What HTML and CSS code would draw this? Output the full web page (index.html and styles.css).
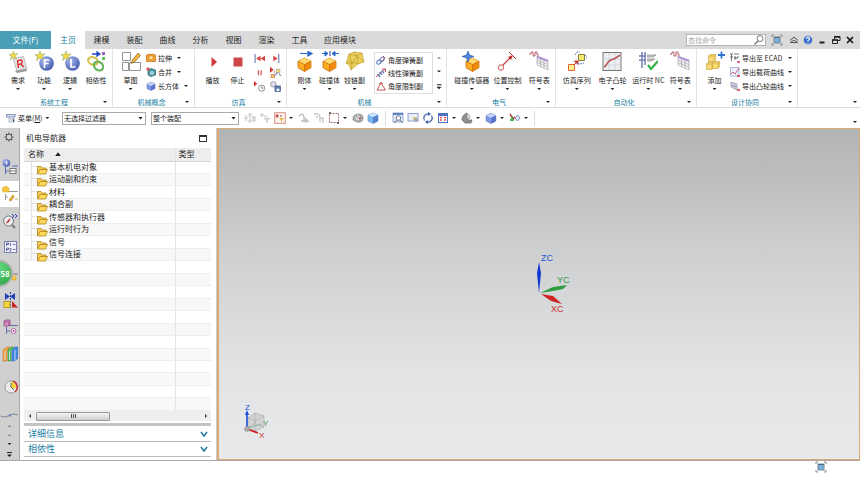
FILE: index.html
```html
<!DOCTYPE html>
<html lang="zh-CN">
<head>
<meta charset="utf-8">
<title>机电概念设计</title>
<link rel="stylesheet" href="styles.css">
</head>
<body>
<svg class="defs" aria-hidden="true">
  <defs>
    <radialGradient id="ball" cx=".35" cy=".3" r=".8"><stop offset="0" stop-color="#a9b9f0"/><stop offset="1" stop-color="#3c54a8"/></radialGradient>
    <symbol id="star" viewBox="0 0 10 10"><path d="M5 0 6 3.400 10 3 7 5.400 8.500 9 5 7 1.500 9.500 2.800 5.800 0 3.800 3.800 3.400Z" fill="#f7dc45" stroke="#93a860" stroke-width=".6"/></symbol>
    <symbol id="orangecube" viewBox="0 0 14 14"><path d="M1 4 7 1 13 4V10L7 13.500 1 10Z" fill="#ffae22" stroke="#c66a08" stroke-width=".8"/><path d="M1 4 7 1 13 4 7 7Z" fill="#ffdb6e"/><path d="M7 7 13 4V10L7 13.500Z" fill="#f08a10"/><path d="M1 4 7 7 13 4M7 7V13" fill="none" stroke="#c66a08" stroke-width=".7"/></symbol>
    <symbol id="bluecube" viewBox="0 0 10 10"><path d="M1 3 5 1 9 3V7.500L5 9.500 1 7.500Z" fill="#7f99e6" stroke="#5f74c0" stroke-width=".6"/><path d="M1 3 5 1 9 3 5 5Z" fill="#c6d3fa"/><path d="M5 5 9 3V7.500L5 9.500Z" fill="#5a74cc"/></symbol>
    <symbol id="yellowcube" viewBox="0 0 8 8"><path d="M.5 2 2 .5H7.500V6L6 7.500H.5Z" fill="#f9dc74" stroke="#c79d34" stroke-width=".6"/><path d="M.5 2H6V7.500M6 2 7.500 .5" fill="none" stroke="#c79d34" stroke-width=".6"/></symbol>

    <symbol id="req" viewBox="0 0 20 22"><path d="M5 7.500 15.500 5.500 19 18 9 20.500Z" fill="#e3e3e3" stroke="#aaa" stroke-width=".7"/><path d="M7 20 18 17.500 19 20 9 22Z" fill="#999"/><path d="M10.500 17 9.500 10 12.500 9Q15.500 9.500 13.500 12.500L10.500 13.500M12.500 13 16 16" fill="none" stroke="#d22" stroke-width="1.300"/><use href="#star" x="1" y="0" width="9" height="9"/></symbol>
    <symbol id="func" viewBox="0 0 20 22"><circle cx="12.500" cy="12.500" r="7.300" fill="url(#ball)"/><path d="M10.500 17V9H15.500M10.500 12.500H14.500" fill="none" stroke="#fff" stroke-width="1.700"/><use href="#star" x="1" y="0" width="10" height="10"/></symbol>
    <symbol id="logic" viewBox="0 0 20 22"><circle cx="12.500" cy="12.500" r="7.300" fill="url(#ball)"/><path d="M11 8V16H15.500" fill="none" stroke="#fff" stroke-width="1.700"/><use href="#star" x="1" y="0" width="10" height="10"/></symbol>
    <symbol id="dep" viewBox="0 0 20 22"><ellipse cx="7" cy="10" rx="5" ry="3.700" transform="rotate(20 7 10)" fill="none" stroke="#d4c04c" stroke-width="2.200"/><ellipse cx="12.500" cy="15" rx="5" ry="4" transform="rotate(40 12.500 15)" fill="none" stroke="#65b35a" stroke-width="2.200"/><path d="M6 3H12M11 1 14 3 11 5Z" stroke="#2448c0" stroke-width="1.300" fill="#2448c0"/><rect x="16" y="1" width="3" height="3" fill="#a05ed0"/><rect x="16" y="6" width="3" height="3" fill="#5cc65c"/></symbol>
    <symbol id="sketch" viewBox="0 0 20 22"><path d="M1.500 1.500H9.500V9.500H1.500ZM1.500 11.500H7.500V19.500H1.500ZM8.500 11.500H19.500V19.500H8.500Z" fill="#fff" stroke="#888" stroke-width=".9"/><path d="M17 2 19.500 4.500 13.500 11 10 12.500 11.500 9Z" fill="#f3b53b" stroke="#8a6426" stroke-width=".7"/></symbol>
    <symbol id="rigid" viewBox="0 0 20 22"><use href="#orangecube" x="2" y="6" width="15" height="15"/><path d="M5 2.500H14M13 .5 17 2.500 13 5Z" fill="#2b66c8" stroke="#2b66c8" stroke-width="1.200"/></symbol>
    <symbol id="collide" viewBox="0 0 20 22"><use href="#orangecube" x="2" y="6" width="15" height="15"/><path d="M2 2.500H6M5 .5 8 2.500 5 5ZM19 2.500H15M15 .5 12 2.500 15 5Z" fill="#2b66c8" stroke="#2b66c8"/><path d="M10 0V5" stroke="#223e90"/></symbol>
    <symbol id="hinge" viewBox="0 0 20 22"><path d="M4 3 9 1 17 2 19 11 13 13 6 19 4 14 1 12Z" fill="#ecd05a" stroke="#b99a34" stroke-width=".6"/><path d="M4 3 12 5 17 2M12 5 13 13 3 10M4 3 7 13 12 5 19 11M9 1 12 5M1 12 7 13M6 19 7 13" fill="none" stroke="#a98a26" stroke-width=".5"/></symbol>
    <symbol id="sensor" viewBox="0 0 20 22"><use href="#orangecube" x="3" y="6" width="15" height="15"/><path d="M6 0 7.500 4 12 5.500 7.500 7 6 11 4.500 7 0 5.500 4.500 4Z" fill="#4d83dc" stroke="#2854a8" stroke-width=".6"/></symbol>
    <symbol id="position" viewBox="0 0 20 22"><circle cx="4" cy="16.500" r="2.600" fill="#fff" stroke="#d87870" stroke-width="1.100"/><path d="M6 14 14 6" stroke="#bd3030" stroke-width="1.200"/><path d="M11 6 16 4 14 9Z" fill="#bd3030"/><path d="M12 1 19 8" stroke="#bd3030"/></symbol>
    <symbol id="signals" viewBox="0 0 20 22"><path d="M0 3H2V1H4V5H6V1H8V4H10" fill="none" stroke="#b3525e" stroke-width=".9"/><path d="M8 5 19 9V19L8 14Z" fill="#f6f4fa" stroke="#999" stroke-width=".6"/><path d="M8 5 19 9V11L8 7Z" fill="#b291dd"/><path d="M8 9 19 13.500M8 11.500 19 16M11.500 7V15.500M15 8V17" stroke="#999" stroke-width=".6"/></symbol>
    <symbol id="seq" viewBox="0 0 20 22"><path d="M11.500 3.500H17.500V9.500H11.500Z" fill="#f7e96a" stroke="#88803a"/><path d="M1.500 13.500H7.500V19.500H1.500Z" fill="#fbf08a" stroke="#de643d"/><path d="M7 14 10 11M7.500 10H11V13.500Z" stroke="#c33" fill="#c33"/><path d="M8 4 10 1 13 1M18 4 20 6 20 9M10 12 13 13 17 12" fill="none" stroke="#5777b5" stroke-dasharray="2 1"/></symbol>
    <symbol id="cam" viewBox="0 0 20 22"><rect x="1" y="1.500" width="18" height="18" fill="#eceef2" stroke="#777"/><path d="M7 2V19M13 2V19M1 8H19M1 14H19" stroke="#cbd0d8" stroke-width=".7"/><path d="M2 16C5 15 5 10 9 9S14 7 18 4" fill="none" stroke="#bd4a4a" stroke-width="1.500"/></symbol>
    <symbol id="nc" viewBox="0 0 20 22"><path d="M1 5H8M1 9H8M4 1V17M7 1V14" stroke="#7380b5" stroke-width="1.500"/><path d="M9 4H18L15 6H9M9 8H17L13 10H9" fill="#ccc" stroke="#888" stroke-width=".7"/><path d="M10 14 13 18 20 10" fill="none" stroke="#35b44a" stroke-width="2.200"/></symbol>
    <symbol id="add" viewBox="0 0 20 22"><use href="#yellowcube" x="3" y="3" width="8" height="8"/><use href="#yellowcube" x="1" y="11" width="8" height="8"/><use href="#yellowcube" x="7" y="10" width="8" height="8"/><path d="M13 4H20M16.500 .5V7.500" stroke="#2f74d2" stroke-width="1.800"/></symbol>

    <symbol id="extrude" viewBox="0 0 10 10"><path d="M.5 2 4 1 5 2 6 1 9.500 2V8.500H.5Z" fill="#f4a632" stroke="#c0690f" stroke-width=".7"/><rect x="3" y="3" width="4" height="3.500" fill="#ffe4a0" stroke="#c0690f" stroke-width=".5"/></symbol>
    <symbol id="union" viewBox="0 0 10 10"><path d="M2 3 5 1.500 9.500 3V8L5 9.500 2 8Z" fill="#4d9ca7" stroke="#28616f" stroke-width=".7"/><circle cx="6" cy="6" r="2" fill="#a6d0d6"/><path d="M0 2H4M2 0V4" stroke="#d33"/></symbol>
    <symbol id="play" viewBox="0 0 20 22"><path d="M8.500 6 14 11 8.500 16Z" fill="#d33b3b"/></symbol>
    <symbol id="stop" viewBox="0 0 20 22"><rect x="5.500" y="6.500" width="9" height="9" fill="#cf4646"/></symbol>
    <symbol id="rew" viewBox="0 0 10 10"><path d="M1 1V9" stroke="#667bb0"/><path d="M6 2.500V7.500L2 5ZM10 2.500V7.500L6 5Z" fill="#d84444"/></symbol>
    <symbol id="fwd" viewBox="0 0 10 10"><path d="M8 1V9" stroke="#667bb0"/><path d="M3 2.500V7.500L7 5Z" fill="#d84444"/></symbol>
    <symbol id="pause" viewBox="0 0 10 10"><path d="M4 3V7.500M6.500 3V7.500" stroke="#e06060" stroke-width="1.200"/></symbol>
    <symbol id="simstep" viewBox="0 0 10 10"><path d="M0 0V5L3 2.500ZM4 3V6" fill="#d33" stroke="#d33" stroke-width=".5"/><rect x="6" y="2" width="3" height="3" fill="#f7e56a" stroke="#999" stroke-width=".6"/><rect x="1" y="7" width="3" height="3" fill="#f7c56a" stroke="#c63" stroke-width=".6"/><path d="M4 8 7 5M8 6 10 8" stroke="#88a"/></symbol>
    <symbol id="simtime" viewBox="0 0 10 10"><path d="M0 0V5L3 2.500Z" fill="#d33"/><circle cx="7" cy="6.500" r="2.800" fill="#fff" stroke="#7c828c" stroke-width=".8"/><path d="M7 5V6.500H8.500" fill="none" stroke="#555" stroke-width=".7"/></symbol>
    <symbol id="simsave" viewBox="0 0 10 10"><circle cx="3" cy="3" r="2.500" fill="#dde" stroke="#889" stroke-width=".7"/><rect x="4.500" y="4.500" width="5" height="5" fill="#5f7cae" stroke="#3d5787" stroke-width=".6"/><rect x="6" y="7" width="2.500" height="2" fill="#fff"/></symbol>
    <symbol id="spring" viewBox="0 0 10 10"><path d="M6 6 9 3 7 1" fill="none" stroke="#c44"/><ellipse cx="3" cy="7" rx="2.500" ry="1.800" transform="rotate(-35 3 7)" fill="none" stroke="#5877bb"/><ellipse cx="6" cy="4.500" rx="2.600" ry="1.800" transform="rotate(-50 6 4.500)" fill="none" stroke="#7188c5"/></symbol>
    <symbol id="linspring" viewBox="0 0 10 10"><path d="M0 9 9 1M6 1H9.500V4" fill="none" stroke="#c44" stroke-width=".9"/><path d="M1.500 6 4 9M3.500 4 6 7M5.500 2.500 8 5" stroke="#5877bb" stroke-width="1.300"/></symbol>
    <symbol id="limit" viewBox="0 0 10 10"><path d="M5 2 1 9H9.500L5 2M3 3Q5 0 7 3" fill="none" stroke="#c45555"/></symbol>
    <symbol id="ecad" viewBox="0 0 10 10"><path d="M0 1H3M1.500 1V8M0 4H3M4 1H9M5 3V7M8 3V5" fill="none" stroke="#555" stroke-width=".8"/><path d="M4 5H8" stroke="#555"/><path d="M7 9H10" stroke="#c36" stroke-width="1.500"/></symbol>
    <symbol id="load" viewBox="0 0 10 10"><path d="M.5 .5V9H9V.5Z" fill="#edf0fa" stroke="#8c9bc5" stroke-width=".7"/><path d="M1 7 3 5 5 7 9 1" fill="none" stroke="#c45b8b"/><path d="M7 9H10" stroke="#d34" stroke-width="1.500"/></symbol>
    <symbol id="camexp" viewBox="0 0 10 10"><path d="M1 1 7 3V9L1 6ZM3 2V7M5 2.500V8M1 4 7 6" fill="#eef" stroke="#8885a0" stroke-width=".7"/><path d="M7 9H10" stroke="#d34" stroke-width="1.500"/></symbol>

    <symbol id="menu" viewBox="0 0 10 10"><path d="M.5 1.500H9.500M.5 1V4H9V1" fill="#dce6f5" stroke="#8595b4"/><path d="M3 4V9H8V4Z" fill="#fff" stroke="#8595b4" stroke-width=".7"/><path d="M4 5.500H7M4 7H7" stroke="#8595b4" stroke-width=".6"/><path d="M7 5V9L8.500 8" fill="#444"/></symbol>
    <symbol id="snap" viewBox="0 0 12 12"><path d="M2 3V9M6 1V11M9 4V9M0 6H4M4 3 8 2M4 9 11 9V5H8" fill="none" stroke="#c9c9c9" stroke-width="1.200"/></symbol>
    <symbol id="filter0" viewBox="0 0 12 12"><path d="M1 3H5M3 1V5M5 4H8" stroke="#c4c4c4"/><path d="M5 6H11L8.500 8.500V11L7.500 10V8.500Z" fill="#ddd" stroke="#c0c0c0" stroke-width=".6"/></symbol>
    <symbol id="filter1" viewBox="0 0 12 12"><rect x=".7" y=".7" width="10.600" height="10.600" fill="#fff7f2" stroke="#d98c80"/><path d="M3 2V6M1.500 4H5M6 4H8" stroke="#a33"/><path d="M5 6H10L8 8.500V10.500L7 9.500V8.500Z" fill="#e6b64a"/></symbol>
    <symbol id="curve1" viewBox="0 0 12 12"><path d="M1 4Q5 0 6 5V9M3 9H10L7 6M8 7V11" fill="none" stroke="#bdbdbd" stroke-width="1.300"/></symbol>
    <symbol id="curve2" viewBox="0 0 12 12"><path d="M1 2H5Q7 3 7 6V10M7 6H10V11M3 5H5" fill="none" stroke="#c5c5c5" stroke-width="1.300"/></symbol>
    <symbol id="marquee" viewBox="0 0 12 12"><rect x="1.500" y="1.500" width="9" height="9" fill="none" stroke="#a66b6b" stroke-dasharray="2 1"/><path d="M1 1H3M9 11H11" stroke="#444" stroke-width="1.500"/></symbol>
    <symbol id="disc" viewBox="0 0 12 12"><path d="M1 8Q0 3 6 2 12 2 11 7 10 11 5 10Z" fill="#a9acb4" stroke="#888" stroke-width=".7"/><path d="M3 5 7 8M5 3 9 6M4 8 8 4" stroke="#eee"/><circle cx="8" cy="6" r="1.300" fill="#c67070"/></symbol>
    <symbol id="skycube" viewBox="0 0 12 12"><path d="M1 3 6 1 11 3V9L6 11.500 1 9Z" fill="#79b5ee" stroke="#5a8ac5" stroke-width=".6"/><path d="M1 3 6 1 11 3 6 5Z" fill="#d0e8ff"/><path d="M6 5 11 3V9L6 11.500Z" fill="#5781cd"/></symbol>
    <symbol id="zoomwin" viewBox="0 0 12 12"><rect x="1" y="1" width="10" height="9" fill="#e6edfa" stroke="#6c85bd" stroke-width=".7"/><path d="M1 2H11" stroke="#4068b8" stroke-width="1.500"/><circle cx="6.500" cy="6" r="2.300" fill="#fff" stroke="#678"/><path d="M5 8 2 11M8 8 10.500 11" stroke="#678"/></symbol>
    <symbol id="fitwin" viewBox="0 0 12 12"><rect x="1" y="1.500" width="10" height="7.500" fill="#e9eefa" stroke="#8ca0cc"/><path d="M6 5H10V8H6Z" fill="#e6c96a"/><circle cx="9" cy="8" r="2" fill="#9ab"/></symbol>
    <symbol id="rotate" viewBox="0 0 12 12"><path d="M2.500 8.500A4.300 4.300 0 0 1 6 1.800M9.500 3.500A4.300 4.300 0 0 1 6 10.200" fill="none" stroke="#4c6cae" stroke-width="1.300"/><path d="M6 0 9 2 6 4ZM6 8 3 10 6 12Z" fill="#3c62ae"/></symbol>
    <symbol id="views" viewBox="0 0 12 12"><rect x="1" y="1" width="10" height="10" fill="#4d70c2"/><path d="M2 4H10V10H2Z" fill="#fff"/><path d="M3 5.500H5M7 5.500H9M3 8H5M7 8H9" stroke="#d55" stroke-width="1.500"/></symbol>
    <symbol id="section" viewBox="0 0 12 12"><path d="M6 1Q1 3 1 8L4 11H10L11 8 7 8Z" fill="#8e8e8e" stroke="#666" stroke-width=".7"/><path d="M6 1V7L9 6Q9 3 6 1Z" fill="#ddd" stroke="#888" stroke-width=".6"/></symbol>
    <symbol id="layer" viewBox="0 0 12 12"><path d="M1 2 4 7 6 5" fill="none" stroke="#c33" stroke-width="1.500"/><path d="M1 8H5M3 4V9" stroke="#3a4" stroke-width="1.500"/><path d="M6 6 8.500 3 11 6 8.500 9Z" fill="#dce5f5" stroke="#7f91b8"/></symbol>

    <symbol id="lens" viewBox="0 0 12 12"><circle cx="7" cy="4.500" r="3" fill="#fff" stroke="#777"/><path d="M5 7 1.500 10.500" stroke="#777" stroke-width="1.500"/></symbol>
    <symbol id="full" viewBox="0 0 12 12"><path d="M1 3V1H3M9 1H11V3M11 9V11H9M3 11H1V9" fill="none" stroke="#888"/><rect x="3" y="3" width="6" height="6" fill="#77b1df" stroke="#7a8894"/><path d="M3 3.500H9" stroke="#5b6771"/></symbol>
    <symbol id="collapse" viewBox="0 0 12 12"><path d="M2 6.500 6 3 10 6.500M2.500 8.500 6 6 9.500 8.500Z" fill="none" stroke="#444" stroke-width=".9"/></symbol>
    <symbol id="help" viewBox="0 0 12 12"><circle cx="6" cy="6" r="4.300" fill="#3f70cf"/><path d="M4.500 4.700Q4.500 3.200 6 3.200T7.500 4.700Q7.500 5.500 6 6.500V7M6 8.200V9.300" fill="none" stroke="#fff" stroke-width="1.200"/></symbol>
    <symbol id="min" viewBox="0 0 12 12"><path d="M3.500 8.500H8.500" stroke="#222" stroke-width="2"/></symbol>
    <symbol id="restore" viewBox="0 0 12 12"><path d="M4.500 5V2.500H10V6.500H8M2.500 6H7.500V9.500H2.500Z" fill="none" stroke="#222"/><path d="M4 3H10M2 6H8" stroke="#222" stroke-width="1.500"/></symbol>
    <symbol id="close" viewBox="0 0 12 12"><path d="M3 3 9 9M9 3 3 9" stroke="#111" stroke-width="1.600"/></symbol>
    <symbol id="gear" viewBox="0 0 12 12"><circle cx="6" cy="6" r="3" fill="none" stroke="#555"/><path d="M6 1.500V3M6 9V10.500M1.500 6H3M9 6H10.500M2.800 2.800 4 4M8 8 9.200 9.200M9.200 2.800 8 4M4 8 2.800 9.200" stroke="#555" stroke-width="1.200"/></symbol>
    <symbol id="folder" viewBox="0 0 11 10"><path d="M.5 8.500V1.500H4L5 3H9V5" fill="#f5cd5a" stroke="#b18317" stroke-width=".8"/><path d="M.5 9 3 4.500H10.500L8.500 9Z" fill="#ffd95c" stroke="#b18317" stroke-width=".8"/></symbol>

    <symbol id="s1" viewBox="0 0 16 18"><circle cx="4.500" cy="5" r="3.800" fill="url(#ball)"/><path d="M3.500 4Q5.500 3 5 5T4 7" stroke="#fff" fill="none"/><path d="M10 8H16M3.500 9V16M3.500 13H7" stroke="#5770b5"/><rect x="8" y="10.500" width="6" height="5" fill="#fff" stroke="#777"/><path d="M8 13H14" stroke="#777"/></symbol>
    <symbol id="s2" viewBox="0 0 16 18"><path d="M0 3 4 1 7 3V7H1Z" fill="#f7c640" stroke="#d69c26" stroke-width=".5"/><path d="M7 6.500H16M3.500 9V15M3.500 12H6" stroke="#999"/><path d="M7 15 11 10 12 12 9 16ZM13 14H16" fill="#e9b440" stroke="#b68424" stroke-width=".7"/></symbol>
    <symbol id="s3" viewBox="0 0 16 18"><circle cx="6.500" cy="9" r="5" fill="#e9f0f5" stroke="#777"/><path d="M3.500 12 6 8 9 6 7 10Z" fill="#c33"/><path d="M10 13 13 16" stroke="#777" stroke-width="2"/><path d="M10 2 12 4 10 6M13 2 15 4 13 6" fill="none" stroke="#2448b8"/></symbol>
    <symbol id="s4" viewBox="0 0 16 18"><rect x="2.500" y="3.500" width="12" height="11" fill="#f0f1ff" stroke="#7c82b0"/><path d="M4.500 8V5H6.500V6.500H4.500M8.500 5V8M4.500 13V10H6.500V11.500H4.500M7.500 10.500H9V11.500L7.500 13H9M11 6.500H13.500M11 11.500H13.500" fill="none" stroke="#4a4d85" stroke-width=".8"/></symbol>
    <symbol id="s5" viewBox="0 0 16 18"><path d="M10 9H16" stroke="#777"/><circle cx="12" cy="13" r="2.600" fill="#eeb238"/><circle cx="12" cy="12.500" r="1" fill="#ffe59a"/></symbol>
    <symbol id="s6" viewBox="0 0 16 18"><path d="M3 2 8 5.500 3 9ZM13 2 8 5.500 13 9Z" fill="#2442b8"/><path d="M8.500 1V17" stroke="#2442b8" stroke-dasharray="2 1"/><rect x="2" y="10.500" width="6" height="6" fill="#f6d93e" stroke="#b9991d"/><path d="M10 10 16 16.500H10Z" fill="#c92626"/></symbol>
    <symbol id="s7" viewBox="0 0 16 18"><path d="M2 3 4 2H8V7L7 8H2Z" fill="#d892c8" stroke="#8c407c" stroke-width=".8"/><path d="M2 4H7V8" fill="none" stroke="#8c407c" stroke-width=".7"/><path d="M8 7.500H16M4.500 9V16M4.500 13H8" stroke="#656da5" fill="none"/><circle cx="11.500" cy="13" r="2.500" fill="#fff" stroke="#b060a0"/><circle cx="11.500" cy="13" r="1" fill="#a04080"/></symbol>
    <symbol id="s8" viewBox="0 0 16 18"><path d="M1 5 5 2H8L5 5V16H1Z" fill="#f3a444" stroke="#b9641b" stroke-width=".5"/><path d="M6 5 9 2H12L9 5V16H6Z" fill="#57c057" stroke="#268a34" stroke-width=".5"/><path d="M10 5 13 2H16V13L13 16H10Z" fill="#4388df" stroke="#225ba8" stroke-width=".5"/><path d="M3 6V15M7.500 6V15M13 5V16" stroke="#dceaff" stroke-width=".8"/></symbol>
    <symbol id="s9" viewBox="0 0 16 18"><circle cx="9" cy="9" r="6" fill="#ececec" stroke="#9b9b9b"/><path d="M9 10V4A5 5 0 0 1 14 10Z" fill="#f3d630"/><path d="M11 3A6.500 6.500 0 0 1 13 14" fill="none" stroke="#cb3333" stroke-width="1.500"/><path d="M9 5V9L12 12" fill="none" stroke="#666"/></symbol>
    <symbol id="s10" viewBox="0 0 20 6"><path d="M1 4Q4 6 8 4T13 2 18 3" fill="none" stroke="#848b99" stroke-width="1.200"/><circle cx="10" cy="3.500" r="1.200" fill="#6d80c0"/></symbol>
  </defs>
</svg>

<header class="tabbar">
  <button class="tab file">文件(F)</button>
  <nav class="tabs">
    <button class="tab active">主页</button><button class="tab">建模</button><button class="tab">装配</button><button class="tab">曲线</button><button class="tab">分析</button><button class="tab">视图</button><button class="tab">渲染</button><button class="tab">工具</button><button class="tab">应用模块</button>
  </nav>
  <label class="search"><input type="text" placeholder="查找命令" aria-label="查找命令"><svg class="ic12"><use href="#lens"/></svg></label>
  <div class="winbtns">
    <button aria-label="全屏"><svg class="ic12"><use href="#full"/></svg></button>
    <button aria-label="折叠"><svg class="ic12"><use href="#collapse"/></svg></button>
    <button aria-label="帮助"><svg class="ic12"><use href="#help"/></svg></button>
    <button aria-label="最小化"><svg class="ic12"><use href="#min"/></svg></button>
    <button aria-label="还原"><svg class="ic12"><use href="#restore"/></svg></button>
    <button aria-label="关闭"><svg class="ic12"><use href="#close"/></svg></button>
  </div>
</header>

<section class="ribbon">
  <div class="group g-system">
    <div class="tools">
      <button class="big"><svg><use href="#req"/></svg>需求<i class="caret"></i></button>
      <button class="big"><svg><use href="#func"/></svg>功能<i class="caret"></i></button>
      <button class="big"><svg><use href="#logic"/></svg>逻辑<i class="caret"></i></button>
      <button class="big"><svg><use href="#dep"/></svg>相依性</button>
    </div>
    <div class="name"><span>系统工程</span><i class="caret"></i></div>
  </div>
  <div class="group g-concept">
    <div class="tools">
      <button class="big"><svg><use href="#sketch"/></svg>草图<i class="caret"></i></button>
      <div class="list">
        <button class="row"><svg><use href="#extrude"/></svg>拉伸<i class="caret"></i></button>
        <button class="row"><svg><use href="#union"/></svg>合并<i class="caret"></i></button>
        <button class="row"><svg><use href="#bluecube"/></svg>长方体<i class="caret"></i></button>
      </div>
    </div>
    <div class="name"><span>机械概念</span><i class="caret"></i></div>
  </div>
  <div class="group g-sim">
    <div class="tools">
      <button class="big"><svg><use href="#play"/></svg>播放</button>
      <button class="big"><svg><use href="#stop"/></svg>停止</button>
      <div class="pad">
        <button aria-label="后退"><svg><use href="#rew"/></svg></button>
        <button aria-label="前进"><svg><use href="#fwd"/></svg></button>
        <button aria-label="暂停"><svg><use href="#pause"/></svg></button>
        <button aria-label="步进"><svg><use href="#simstep"/></svg></button>
        <button aria-label="时间"><svg><use href="#simtime"/></svg></button>
        <button aria-label="保存"><svg><use href="#simsave"/></svg></button>
      </div>
    </div>
    <div class="name"><span>仿真</span><i class="caret"></i></div>
  </div>
  <div class="group g-mech">
    <div class="tools">
      <button class="big"><svg><use href="#rigid"/></svg>刚体<i class="caret"></i></button>
      <button class="big"><svg><use href="#collide"/></svg>碰撞体<i class="caret"></i></button>
      <button class="big"><svg><use href="#hinge"/></svg>铰链副<i class="caret"></i></button>
      <div class="gallery">
        <button class="row"><svg><use href="#spring"/></svg>角度弹簧副</button>
        <button class="row"><svg><use href="#linspring"/></svg>线性弹簧副</button>
        <button class="row"><svg><use href="#limit"/></svg>角度限制副</button>
      </div>
      <div class="spin"><i class="caret up dim"></i><i class="caret"></i><i class="caret more"></i></div>
    </div>
    <div class="name"><span>机械</span><i class="caret"></i></div>
  </div>
  <div class="group g-elec">
    <div class="tools">
      <button class="big"><svg><use href="#sensor"/></svg>碰撞传感器<i class="caret"></i></button>
      <button class="big"><svg><use href="#position"/></svg>位置控制<i class="caret"></i></button>
      <button class="big"><svg><use href="#signals"/></svg>符号表<i class="caret"></i></button>
    </div>
    <div class="name"><span>电气</span><i class="caret"></i></div>
  </div>
  <div class="group g-auto">
    <div class="tools">
      <button class="big"><svg><use href="#seq"/></svg>仿真序列<i class="caret"></i></button>
      <button class="big"><svg><use href="#cam"/></svg>电子凸轮<i class="caret"></i></button>
      <button class="big"><svg><use href="#nc"/></svg>运行时 NC<i class="caret"></i></button>
      <button class="big"><svg><use href="#signals"/></svg>符号表<i class="caret"></i></button>
    </div>
    <div class="name"><span>自动化</span><i class="caret"></i></div>
  </div>
  <div class="group g-design">
    <div class="tools">
      <button class="big"><svg><use href="#add"/></svg>添加<i class="caret"></i></button>
      <div class="list">
        <button class="row"><svg><use href="#ecad"/></svg>导出至 ECAD<i class="caret"></i></button>
        <button class="row"><svg><use href="#load"/></svg>导出载荷曲线<i class="caret"></i></button>
        <button class="row"><svg><use href="#camexp"/></svg>导出凸轮曲线<i class="caret"></i></button>
      </div>
    </div>
    <div class="name"><span>设计协同</span><i class="caret"></i></div>
  </div>
  <div class="ribbon-end"><i class="caret"></i></div>
</section>

<section class="toolbar">
  <button class="menu"><svg class="ic10"><use href="#menu"/></svg>菜单(<u>M</u>)<i class="caret"></i></button>
  <div class="combo"><select aria-label="选择过滤器"><option>无选择过滤器</option></select></div>
  <div class="combo wide"><select aria-label="选择范围"><option>整个装配</option></select></div>
  <div class="icons select-icons">
    <svg class="ic12"><use href="#snap"/></svg><svg class="ic12"><use href="#filter0"/></svg><span><svg class="ic12"><use href="#filter1"/></svg><i class="caret"></i></span><svg class="ic12"><use href="#curve1"/></svg><svg class="ic12"><use href="#curve2"/></svg><span><svg class="ic12"><use href="#marquee"/></svg><i class="caret"></i></span><svg class="ic12"><use href="#disc"/></svg><svg class="ic12"><use href="#skycube"/></svg>
  </div>
  <div class="icons view-icons">
    <svg class="ic12"><use href="#zoomwin"/></svg><svg class="ic12"><use href="#fitwin"/></svg><svg class="ic12"><use href="#rotate"/></svg><span><svg class="ic12"><use href="#views"/></svg><i class="caret"></i></span><span><svg class="ic12"><use href="#section"/></svg><i class="caret"></i></span><span><svg class="ic12"><use href="#bluecube"/></svg><i class="caret"></i></span><span><svg class="ic12"><use href="#layer"/></svg><i class="caret"></i></span>
  </div>
  <i class="caret end"></i>
</section>

<main class="work">
  <aside class="strip">
    <button class="gear" aria-label="设置"><svg class="ic12"><use href="#gear"/></svg></button>
    <div class="side">
      <button aria-label="装配导航器"><svg><use href="#s1"/></svg></button>
      <button class="on" aria-label="机电导航器"><svg><use href="#s2"/></svg></button>
      <button aria-label="运行时察看器"><svg><use href="#s3"/></svg></button>
      <button aria-label="表达式"><svg><use href="#s4"/></svg></button>
      <button aria-label="约束"><svg><use href="#s5"/></svg><b class="badge">58</b></button>
      <button aria-label="镜像"><svg><use href="#s6"/></svg></button>
      <button aria-label="部件"><svg><use href="#s7"/></svg></button>
      <button aria-label="重用库"><svg><use href="#s8"/></svg></button>
    </div>
    <button class="history" aria-label="历史"><svg><use href="#s9"/></svg></button>
    <div class="tail"><svg><use href="#s10"/></svg><i class="caret up dim"></i><i class="caret up dim"></i><i class="caret"></i><i class="caret more"></i></div>
  </aside>

  <section class="panel">
    <h1>机电导航器<button class="box" aria-label="最大化"></button></h1>
    <table class="tree">
      <thead><tr><th>名称<i class="sort"></i></th><th>类型</th></tr></thead>
      <tbody>
        <tr><td><svg><use href="#folder"/></svg>基本机电对象</td><td></td></tr>
        <tr><td><svg><use href="#folder"/></svg>运动副和约束</td><td></td></tr>
        <tr><td><svg><use href="#folder"/></svg>材料</td><td></td></tr>
        <tr><td><svg><use href="#folder"/></svg>耦合副</td><td></td></tr>
        <tr><td><svg><use href="#folder"/></svg>传感器和执行器</td><td></td></tr>
        <tr><td><svg><use href="#folder"/></svg>运行时行为</td><td></td></tr>
        <tr><td><svg><use href="#folder"/></svg>信号</td><td></td></tr>
        <tr><td><svg><use href="#folder"/></svg>信号连接</td><td></td></tr>
        <tr><td></td><td></td></tr><tr><td></td><td></td></tr><tr><td></td><td></td></tr><tr><td></td><td></td></tr><tr><td></td><td></td></tr><tr><td></td><td></td></tr>
        <tr><td></td><td></td></tr><tr><td></td><td></td></tr><tr><td></td><td></td></tr><tr><td></td><td></td></tr><tr><td></td><td></td></tr><tr><td></td><td></td></tr>
      </tbody>
    </table>
    <div class="hscroll"><i class="left"></i><div class="thumb"><i></i></div><i class="right"></i></div>
    <button class="fold first">详细信息<svg viewBox="0 0 8 6"><path d="M1 1 4 5 7 1" fill="none" stroke="#247da3" stroke-width="1.600"/></svg></button>
    <button class="fold">相依性<svg viewBox="0 0 8 6"><path d="M1 1 4 5 7 1" fill="none" stroke="#247da3" stroke-width="1.600"/></svg></button>
  </section>

  <section class="canvas">
    <svg class="wcs" viewBox="0 0 40 66">
      <path d="M10 40 8 20 10 9 12 20Z" fill="#1238d2"/>
      <path d="M11 40 24 34 38 32 34 36 24 38Z" fill="#2c9c3e"/>
      <path d="M12 41 24 43 33 51 22 48Z" fill="#cf2424"/>
      <text x="12" y="8" fill="#2455dc">ZC</text><text x="28" y="30" fill="#379c48">YC</text><text x="22" y="59" fill="#d03030">XC</text>
    </svg>
    <svg class="triad" viewBox="0 0 28 38">
      <path d="M5 14 12 9 21 12V23L12 27 5 23Z" fill="#d3d4d5" stroke="#adaeaf" stroke-width=".7"/><path d="M5 14 12 17 21 12M12 17V27M12 9V20L5 23M12 20 21 23" fill="none" stroke="#adaeaf" stroke-width=".7"/>
      <path d="M4 24V10" stroke="#1b4ad8" stroke-width="1.600"/><path d="M2 11 4 6 6 11Z" fill="#1b4ad8"/>
      <path d="M4 24 19 20" stroke="#94bd98"/><path d="M4 25 15 29" stroke="#c92222" stroke-width="1.800"/>
      <circle cx="4" cy="25" r="2.500" fill="#aaa" stroke="#888" stroke-width=".5"/>
      <text x="2" y="6" fill="#2455dc">Z</text><text x="20" y="22" fill="#4a9c57">Y</text><text x="16" y="34" fill="#cf2a2a">X</text>
    </svg>
  </section>
</main>

<footer class="status"><svg class="ic12"><use href="#full"/></svg></footer>
</body>
</html>
```
FILE: styles.css
```css
* { box-sizing: border-box; }

body {
  margin: 0;
  padding-top: 31px;
  min-height: 100vh;
  display: flex;
  flex-direction: column;
  background: #fff;
  color: #222;
  font: 7px/10px "Noto Sans CJK SC", sans-serif;
  overflow: hidden;
}

button {
  border: 0;
  padding: 0;
  background: none;
  font: inherit;
  color: inherit;
  white-space: nowrap;
}

svg { display: block; flex: none; }
.defs { position: absolute; width: 0; height: 0; }
.ic12 { width: 12px; height: 12px; }
.ic10 { width: 10px; height: 10px; }

.caret {
  flex: none;
  width: 4px;
  height: 2px;
  background: #222;
  clip-path: polygon(0 0, 100% 0, 50% 100%);
}
.caret.up { clip-path: polygon(50% 0, 100% 100%, 0 100%); }
.caret.dim { background: #888; }
.caret.more { height: 5px; width: 5px; clip-path: polygon(0 0, 100% 0, 100% 20%, 0 20%, 0 50%, 100% 50%, 50% 100%, 0 50%); }

/* Tab bar */
.tabbar {
  display: flex;
  align-items: stretch;
  height: 18px;
  background: #dadada;
}
.tabs { display: flex; flex: 1; }
.tab { min-width: 33px; padding: 0 8px; font-size: 8px; }
.tab.file { width: 51px; background: #4a9fb6; color: #fff; }
.tab.active { background: #fff; color: #17809f; min-width: 34px; }
.search {
  display: flex;
  align-items: center;
  align-self: center;
  width: 80px;
  height: 12px;
  background: #fff;
  border: 1px solid #b5b5b5;
}
.search input {
  flex: 1;
  min-width: 0;
  padding: 0 1px;
  border: 0;
  background: none;
  font: inherit;
  outline: 0;
}
.search input::placeholder { color: #aaa; }
.winbtns { display: flex; align-items: center; gap: 2px; padding: 0 4px 0 5px; }
.winbtns button:first-child { margin-right: 3px; }

/* Ribbon */
.ribbon {
  display: flex;
  height: 59px;
  border-bottom: 1px solid #dedede;
}
.group {
  display: flex;
  flex: none;
  flex-direction: column;
  justify-content: space-between;
  border-right: 1px solid #e2e2e2;
  padding: 2px 0 0 5px;
}
.g-system { width: 113px; }
.g-concept { width: 82px; }
.g-sim { width: 92px; }
.g-mech { width: 160px; }
.g-elec { width: 109px; }
.g-auto { width: 141px; }
.g-design { width: 101px; }

.tools { display: flex; }
.big {
  display: flex;
  flex-direction: column;
  align-items: center;
  width: 25px;
  height: 42px;
}
.big svg { width: 20px; height: 22px; margin-bottom: 2px; }
.big .caret { margin-top: 3px; }
.g-system .big { width: 26px; }
.g-elec .big, .g-auto .big { width: 32px; }
.g-elec .big:first-child, .g-auto .big:nth-child(2) { width: 40px; }

.list { display: flex; flex-direction: column; margin-left: 3px; }
.row { display: flex; align-items: center; gap: 2px; height: 14px; }
.row svg { width: 10px; height: 10px; }
.row .caret { margin-left: 3px; }
.g-design .row { width: 62px; }
.g-design .row .caret { margin-left: auto; }

.pad { display: grid; grid-template-columns: 16px 16px; grid-auto-rows: 14px; place-items: center; margin-left: 1px; }
.pad svg { width: 11px; height: 11px; }

.gallery {
  margin: 1px 0 0 7px;
  width: 59px;
  height: 42px;
  padding-left: 1px;
  border: 1px solid #ddd;
}
.gallery .row { height: 13px; }
.spin { display: flex; flex-direction: column; align-items: center; justify-content: space-around; width: 12px; height: 44px; }

.name { display: flex; align-items: center; padding-right: 5px; color: #17809f; }
.name span { flex: 1; text-align: center; }
.ribbon-end { flex: 1; display: flex; align-items: flex-end; justify-content: flex-end; padding: 0 3px 4px 0; }

/* Selection toolbar */
.toolbar { display: flex; align-items: center; height: 20px; padding: 0 3px 0 6px; }
.menu { display: flex; align-items: center; width: 56px; }
.menu .ic10 { margin-right: 2px; }
.menu .caret { margin-left: 3px; }
.combo { position: relative; width: 84px; height: 13px; margin-right: 5px; }
.combo.wide { width: 88px; }
.combo::after {
  content: "";
  position: absolute;
  right: 3px;
  top: 5px;
  width: 5px;
  height: 3px;
  background: #222;
  clip-path: polygon(0 0, 100% 0, 50% 100%);
}
.combo select {
  display: block;
  width: 100%;
  height: 100%;
  padding: 0 1px;
  appearance: none;
  border: 1px solid #aaa;
  border-radius: 0;
  background: #fff;
  font: inherit;
  color: inherit;
}
.icons { display: flex; align-items: center; gap: 3px; height: 15px; border-right: 1px solid #ddd; }
.icons span { display: flex; align-items: center; gap: 3px; margin-right: 2px; }
.select-icons { width: 142px; }
.view-icons { width: 149px; padding-left: 6px; }
.toolbar .end { margin: 8px 0 0 auto; }

/* Work area */
.work { flex: 1; display: flex; border-bottom: 1px solid #aaa; }
.strip {
  display: flex;
  flex-direction: column;
  align-items: stretch;
  width: 20px;
  background: #d0d0d0;
  border-right: 1px solid #aaa;
}
.strip button { display: flex; align-items: center; justify-content: center; }
.gear { height: 26px; padding: 0 2px 8px 0; }
.side { display: flex; flex-direction: column; height: 213px; }
.side button { position: relative; flex: 1; }
.side svg, .history svg { width: 16px; height: 18px; }
.side .on { background: #fff; }
.badge {
  position: absolute;
  left: -14px;
  top: -1px;
  width: 27px;
  height: 27px;
  padding-left: 11px;
  border: 2px solid #a9b2aa;
  border-radius: 50%;
  background: radial-gradient(circle at 50% 25%, #65d77d, #27a344);
  color: #fff;
  font-size: 8px;
  line-height: 23px;
}
.history { height: 39px; }
.tail { display: flex; flex-direction: column; align-items: center; gap: 7px; padding-top: 6px; }
.tail svg { width: 20px; height: 6px; }

.panel {
  display: flex;
  flex-direction: column;
  width: 197px;
  padding: 0 5px 3px 4px;
  border-right: 1px solid #ccc;
}
.panel h1 {
  display: flex;
  align-items: center;
  justify-content: space-between;
  height: 20px;
  margin: 0;
  padding: 0 4px 0 2px;
  font-size: 8px;
  font-weight: 400;
}
.box { width: 8px; height: 7px; border: 1px solid #333; border-top-width: 2px; }

.tree { flex: 1; width: 100%; border-collapse: collapse; table-layout: fixed; font-size: 8px; }
.tree th {
  height: 13px;
  padding: 0 4px;
  background: #ededed;
  border-bottom: 1px solid #d5d5d5;
  font-weight: 400;
  text-align: left;
}
.tree th:last-child, .tree td:last-child { width: 36px; border-left: 1px solid #e4e4e4; }
.tree td { height: 12px; padding: 0 0 0 13px; line-height: 10px; border-bottom: 1px solid #eee; }
.tree th:last-child { padding: 0 3px; }
.tree tbody tr:nth-child(even) { background: #f8f8f8; }
.tree td svg { display: inline-block; width: 11px; height: 10px; margin: -2px 1px -2px 0; vertical-align: -3px; }
.tree td:first-child:not(:empty)::before { content: ""; display: inline-block; width: 5px; margin: 0 0 3px -6px; border-top: 1px dotted #ccc; }
.tree td:first-child:not(:empty) { padding-left: 14px; background: linear-gradient(#e2e2e2, #e2e2e2) 7px 0 / 1px 100% no-repeat; }
.sort { display: inline-block; width: 6px; height: 4px; margin: 0 0 1px 11px; background: #222; clip-path: polygon(50% 0, 100% 100%, 0 100%); }

.hscroll { display: flex; align-items: center; height: 10px; margin-bottom: 2px; padding: 0 4px 0 5px; background: #eee; }
.hscroll > i { width: 2px; height: 4px; background: #333; }
.left { clip-path: polygon(100% 0, 100% 100%, 0 50%); }
.right { clip-path: polygon(0 0, 100% 50%, 0 100%); margin-left: auto; }
.thumb { display: flex; align-items: center; justify-content: center; width: 74px; height: 9px; margin-left: 5px; border: 1px solid #999; border-radius: 1px; background: linear-gradient(#f5f5f5, #cfcfcf); }
.thumb i { width: 5px; height: 4px; background: repeating-linear-gradient(90deg, #555 0 1px, transparent 1px 2px); }
.fold {
  display: flex;
  align-items: center;
  justify-content: space-between;
  height: 15px;
  padding: 0 3px 0 4px;
  border-bottom: 1px solid #bbb;
  color: #247da3;
  font-size: 9px;
}
.fold.first { height: 19px; border-top: 3px solid #c4c4c4; }
.fold svg { width: 8px; height: 6px; }

.canvas {
  position: relative;
  flex: 1;
  border: 1px solid #dca878;
  border-left-width: 2px;
  background: linear-gradient(#b1b3b4, #d0d1d2 40%, #e2e4e5 75%, #e7e9eb);
}
.canvas text { font-family: "Liberation Sans", sans-serif; }
.wcs { position: absolute; left: calc(50% - 10px); top: calc(50% - 41px); width: 40px; height: 66px; overflow: visible; }
.wcs text { font-size: 9px; }
.triad { position: absolute; left: 24px; bottom: 17px; width: 28px; height: 38px; overflow: visible; }
.triad text { font-size: 8px; }

.status { display: flex; justify-content: flex-end; height: 39px; padding: 0 33px 0 0; }
```
